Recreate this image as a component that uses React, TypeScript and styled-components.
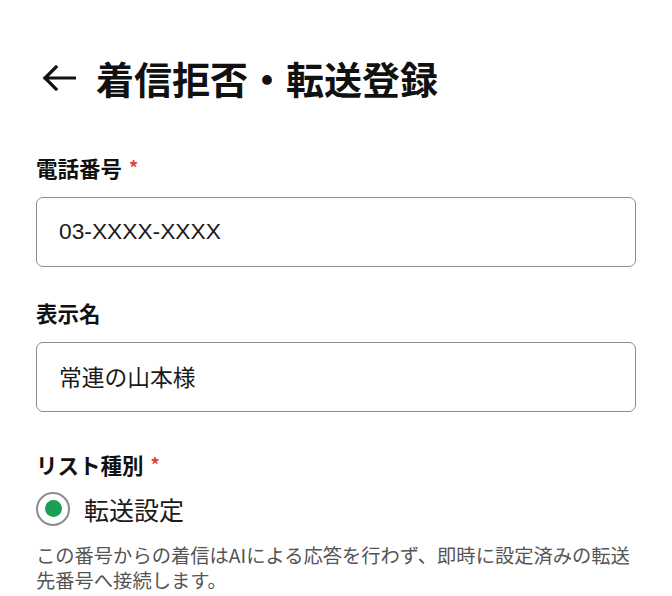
import React from "react";
import styled, { createGlobalStyle } from "styled-components";

const GlobalStyle = createGlobalStyle`
  html, body {
    margin: 0;
    padding: 0;
    background: #ffffff;
  }
  body {
    font-family: "Noto Sans CJK JP", "Noto Sans", sans-serif;
    color: #111;
  }
`;

const Page = styled.div`
  padding: 48px 36px 0 36px;
  display: flex;
  flex-direction: column;
`;

const Header = styled.header`
  display: flex;
  align-items: center;
  gap: 20px;
  height: 60px;
  margin-bottom: 46px;
`;

const BackButton = styled.button`
  border: none;
  background: none;
  padding: 0;
  margin: 0 0 0 6px;
  display: flex;
  align-items: center;
  cursor: pointer;
  color: #111;
`;

const Title = styled.h1`
  margin: 0;
  font-size: 38px;
  font-weight: 700;
  line-height: 1;
  color: #111;
`;

const Field = styled.div`
  display: flex;
  flex-direction: column;
  gap: 15px;
  margin-bottom: 32px;
`;

const ChoiceField = styled(Field)`
  gap: 0;
  margin-top: 7px;
`;

const Label = styled.label`
  font-size: 21.5px;
  font-weight: 700;
  line-height: 1.3;
  color: #111;
  display: flex;
  align-items: center;
  gap: 7px;
`;

const Required = styled.span`
  color: #e0403a;
  font-size: 18px;
`;

const TextInput = styled.input`
  box-sizing: border-box;
  width: 100%;
  height: 70px;
  padding: 0 22px;
  border: 1.5px solid #8c8c8c;
  border-radius: 7px;
  font-family: "Liberation Sans", "Noto Sans CJK JP", sans-serif;
  font-size: 22.75px;
  color: #1a1a1a;
  background: #fff;
  outline: none;
`;

const RadioRow = styled.label`
  display: flex;
  align-items: center;
  gap: 14px;
  margin-top: 12px;
  font-size: 25px;
  color: #1a1a1a;
`;

const RadioRing = styled.span<{ $checked: boolean }>`
  box-sizing: border-box;
  width: 34px;
  height: 34px;
  border-radius: 50%;
  border: 2px solid #8c8c8c;
  display: flex;
  align-items: center;
  justify-content: center;

  &::after {
    content: "";
    width: 17px;
    height: 17px;
    border-radius: 50%;
    background: ${({ $checked }) => ($checked ? "#1c9f55" : "transparent")};
  }
`;

const Help = styled.p`
  margin: 16px 0 0;
  font-size: 19.3px;
  line-height: 25px;
  color: #555;
`;

const ArrowBack = () => (
  <svg width="34" height="26" viewBox="0 0 34 26" fill="none">
    <path
      d="M33 13H3M14 2L3 13l11 11"
      stroke="currentColor"
      strokeWidth="3.2"
      strokeLinecap="square"
      strokeLinejoin="miter"
    />
  </svg>
);

export default function App() {
  return (
    <>
      <GlobalStyle />
      <Page>
        <Header>
          <BackButton aria-label="戻る">
            <ArrowBack />
          </BackButton>
          <Title>着信拒否・転送登録</Title>
        </Header>

        <Field>
          <Label>
            電話番号<Required>*</Required>
          </Label>
          <TextInput defaultValue="03-XXXX-XXXX" />
        </Field>

        <Field>
          <Label>表示名</Label>
          <TextInput defaultValue="常連の山本様" />
        </Field>

        <ChoiceField>
          <Label>
            リスト種別<Required>*</Required>
          </Label>
          <RadioRow>
            <RadioRing $checked />
            転送設定
          </RadioRow>
          <Help>
            この番号からの着信はAIによる応答を行わず、即時に設定済みの転送先番号へ接続します。
          </Help>
        </ChoiceField>
      </Page>
    </>
  );
}
